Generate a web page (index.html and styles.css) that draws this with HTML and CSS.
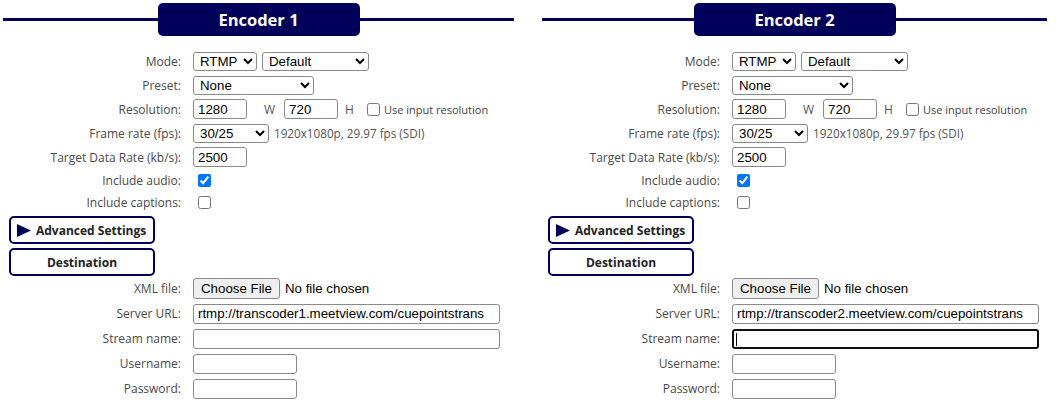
FILE: index.html
```html
<!DOCTYPE html>
<html lang="en">
<head>
  <meta charset="UTF-8">
  <title>Encoders</title>
  <link rel="stylesheet" href="styles.css">
</head>
<body>
  <div class="encoders">
    <div class="encoder">
      <div class="encoder-head">
        <span class="head-line"></span>
        <h2>Encoder 1</h2>
        <span class="head-line"></span>
      </div>
      <div class="row">
        <label class="label">Mode:</label>
        <div class="field">
          <select class="sel-mode"><option>RTMP</option></select>
          <select class="sel-profile"><option>Default</option></select>
        </div>
      </div>
      <div class="row">
        <label class="label">Preset:</label>
        <div class="field"><select class="sel-preset"><option>None</option></select></div>
      </div>
      <div class="row">
        <label class="label">Resolution:</label>
        <div class="field">
          <input type="text" class="in-short" value="1280">
          <span class="unit unit-w">W</span>
          <input type="text" class="in-short" value="720">
          <span class="unit">H</span>
          <input type="checkbox" class="chk-inline">
          <span class="note note-chk">Use input resolution</span>
        </div>
      </div>
      <div class="row">
        <label class="label">Frame rate (fps):</label>
        <div class="field">
          <select class="sel-fps"><option>30/25</option></select>
          <span class="note">1920x1080p, 29.97 fps (SDI)</span>
        </div>
      </div>
      <div class="row">
        <label class="label">Target Data Rate (kb/s):</label>
        <div class="field"><input type="text" class="in-short" value="2500"></div>
      </div>
      <div class="row row-check">
        <label class="label">Include audio:</label>
        <div class="field"><input type="checkbox" checked></div>
      </div>
      <div class="row row-check">
        <label class="label">Include captions:</label>
        <div class="field"><input type="checkbox"></div>
      </div>
      <button class="section-btn">
        <svg class="tri" width="14" height="13" viewBox="0 0 14 13"><path d="M0 0 L14 6.5 L0 13 Z" fill="#00005a"/></svg>
        <span>Advanced Settings</span>
      </button>
      <button class="section-btn centered">Destination</button>
      <div class="dest">
        <div class="row">
          <label class="label">XML file:</label>
          <div class="field"><span class="file-btn">Choose File</span><span class="file-name">No file chosen</span></div>
        </div>
        <div class="row">
          <label class="label">Server URL:</label>
          <div class="field"><input type="text" class="in-long" value="rtmp://transcoder1.meetview.com/cuepointstrans"></div>
        </div>
        <div class="row">
          <label class="label">Stream name:</label>
          <div class="field"><input type="text" class="in-long"></div>
        </div>
        <div class="row">
          <label class="label">Username:</label>
          <div class="field"><input type="text" class="in-mid"></div>
        </div>
        <div class="row">
          <label class="label">Password:</label>
          <div class="field"><input type="password" class="in-mid"></div>
        </div>
      </div>
    </div>

    <div class="encoder">
      <div class="encoder-head">
        <span class="head-line"></span>
        <h2>Encoder 2</h2>
        <span class="head-line"></span>
      </div>
      <div class="row">
        <label class="label">Mode:</label>
        <div class="field">
          <select class="sel-mode"><option>RTMP</option></select>
          <select class="sel-profile"><option>Default</option></select>
        </div>
      </div>
      <div class="row">
        <label class="label">Preset:</label>
        <div class="field"><select class="sel-preset"><option>None</option></select></div>
      </div>
      <div class="row">
        <label class="label">Resolution:</label>
        <div class="field">
          <input type="text" class="in-short" value="1280">
          <span class="unit unit-w">W</span>
          <input type="text" class="in-short" value="720">
          <span class="unit">H</span>
          <input type="checkbox" class="chk-inline">
          <span class="note note-chk">Use input resolution</span>
        </div>
      </div>
      <div class="row">
        <label class="label">Frame rate (fps):</label>
        <div class="field">
          <select class="sel-fps"><option>30/25</option></select>
          <span class="note">1920x1080p, 29.97 fps (SDI)</span>
        </div>
      </div>
      <div class="row">
        <label class="label">Target Data Rate (kb/s):</label>
        <div class="field"><input type="text" class="in-short" value="2500"></div>
      </div>
      <div class="row row-check">
        <label class="label">Include audio:</label>
        <div class="field"><input type="checkbox" checked></div>
      </div>
      <div class="row row-check">
        <label class="label">Include captions:</label>
        <div class="field"><input type="checkbox"></div>
      </div>
      <button class="section-btn">
        <svg class="tri" width="14" height="13" viewBox="0 0 14 13"><path d="M0 0 L14 6.5 L0 13 Z" fill="#00005a"/></svg>
        <span>Advanced Settings</span>
      </button>
      <button class="section-btn centered">Destination</button>
      <div class="dest">
        <div class="row">
          <label class="label">XML file:</label>
          <div class="field"><span class="file-btn">Choose File</span><span class="file-name">No file chosen</span></div>
        </div>
        <div class="row">
          <label class="label">Server URL:</label>
          <div class="field"><input type="text" class="in-long" value="rtmp://transcoder2.meetview.com/cuepointstrans"></div>
        </div>
        <div class="row">
          <label class="label">Stream name:</label>
          <div class="field">
            <span class="focus-wrap"><input type="text" class="in-long is-focused"><span class="caret"></span></span>
          </div>
        </div>
        <div class="row">
          <label class="label">Username:</label>
          <div class="field"><input type="text" class="in-mid"></div>
        </div>
        <div class="row">
          <label class="label">Password:</label>
          <div class="field"><input type="password" class="in-mid"></div>
        </div>
      </div>
    </div>
  </div>
</body>
</html>
```

FILE: styles.css
```css
/* Base */
* {
  margin: 0;
  padding: 0;
  box-sizing: border-box;
}

body {
  font-family: 'Open Sans', 'Noto Sans', sans-serif;
  background: #fff;
  color: #444;
  padding: 3px 0 0 3px;
}

/* Two encoder columns */
.encoders {
  display: grid;
  grid-template-columns: 511px 505px;
  column-gap: 28px;
}

/* Header with line */
.encoder-head {
  display: flex;
  align-items: center;
  height: 33px;
  margin-bottom: 13px;
}

.head-line {
  flex: 1;
  height: 3px;
  background: #00005a;
}

.encoder-head h2 {
  width: 202px;
  height: 33px;
  line-height: 33px;
  background: #00005a;
  border-radius: 5px;
  color: #fff;
  text-align: center;
  font-size: 16.5px;
  font-weight: 700;
}

/* Form rows */
.row {
  display: flex;
  align-items: center;
  height: 24px;
}

.row-check {
  height: 22px;
}

.dest .row {
  height: 25px;
}

.label {
  width: 178px;
  text-align: right;
  font-size: 12px;
  color: #4a4a4a;
}

.field {
  display: flex;
  align-items: center;
  margin-left: 12px;
  font-size: 12px;
}

select,
input[type="text"],
input[type="password"] {
  font-family: 'Liberation Sans', Arial, sans-serif;
  font-size: 13.3px;
  color: #000;
  height: 19px;
  border: 1px solid #8a8a8a;
  border-radius: 3px;
  background: #fff;
}

input[type="text"],
input[type="password"] {
  padding: 0 4px;
  height: 20px;
}

select {
  padding: 0 2px;
}

.sel-mode { width: 64px; }
.sel-profile { width: 107px; margin-left: 5px; }
.sel-preset { width: 121px; }
.sel-fps { width: 76px; }

.in-short { width: 54px; }
.in-mid { width: 104px; }
.in-long { width: 307px; }

.unit {
  font-size: 12px;
  color: #555;
  margin: 0 8px 0 7px;
}

.unit-w {
  margin: 0 9px 0 17px;
}

input[type="checkbox"] {
  width: 13px;
  height: 13px;
  margin-left: 5px;
}

.chk-inline {
  margin: 0 3px 0 0;
}

.note {
  font-size: 11.7px;
  color: #555;
  margin-left: 5px;
}

.note-chk {
  margin-left: 1px;
  font-size: 11px;
  color: #444;
}

/* Section buttons */
.section-btn {
  display: flex;
  align-items: center;
  width: 146px;
  height: 28px;
  margin: 3px 0 0 6px;
  padding: 0 0 0 6px;
  background: #fff;
  border: 2px solid #00005a;
  border-radius: 5px;
  font-family: 'Open Sans', 'Noto Sans', sans-serif;
  font-size: 12px;
  font-weight: 700;
  color: #222;
  white-space: nowrap;
}

.section-btn.centered {
  justify-content: center;
  padding: 0;
  margin-top: 4px;
}

.tri {
  margin: 0 5px 0 0;
  flex-shrink: 0;
}

/* Destination */
.file-btn {
  display: inline-block;
  font-family: 'Liberation Sans', Arial, sans-serif;
  font-size: 13.3px;
  color: #000;
  background: #efefef;
  border: 1px solid #8a8a8a;
  border-radius: 3px;
  height: 21px;
  line-height: 19px;
  padding: 0 7px;
}

.file-name {
  font-family: 'Liberation Sans', Arial, sans-serif;
  font-size: 13.3px;
  color: #000;
  margin-left: 5px;
}

.focus-wrap {
  position: relative;
  display: inline-block;
}

input.is-focused {
  border: 2px solid #111;
  outline: none;
}

.caret {
  position: absolute;
  left: 4px;
  top: 4px;
  width: 1px;
  height: 13px;
  background: #000;
}
```
